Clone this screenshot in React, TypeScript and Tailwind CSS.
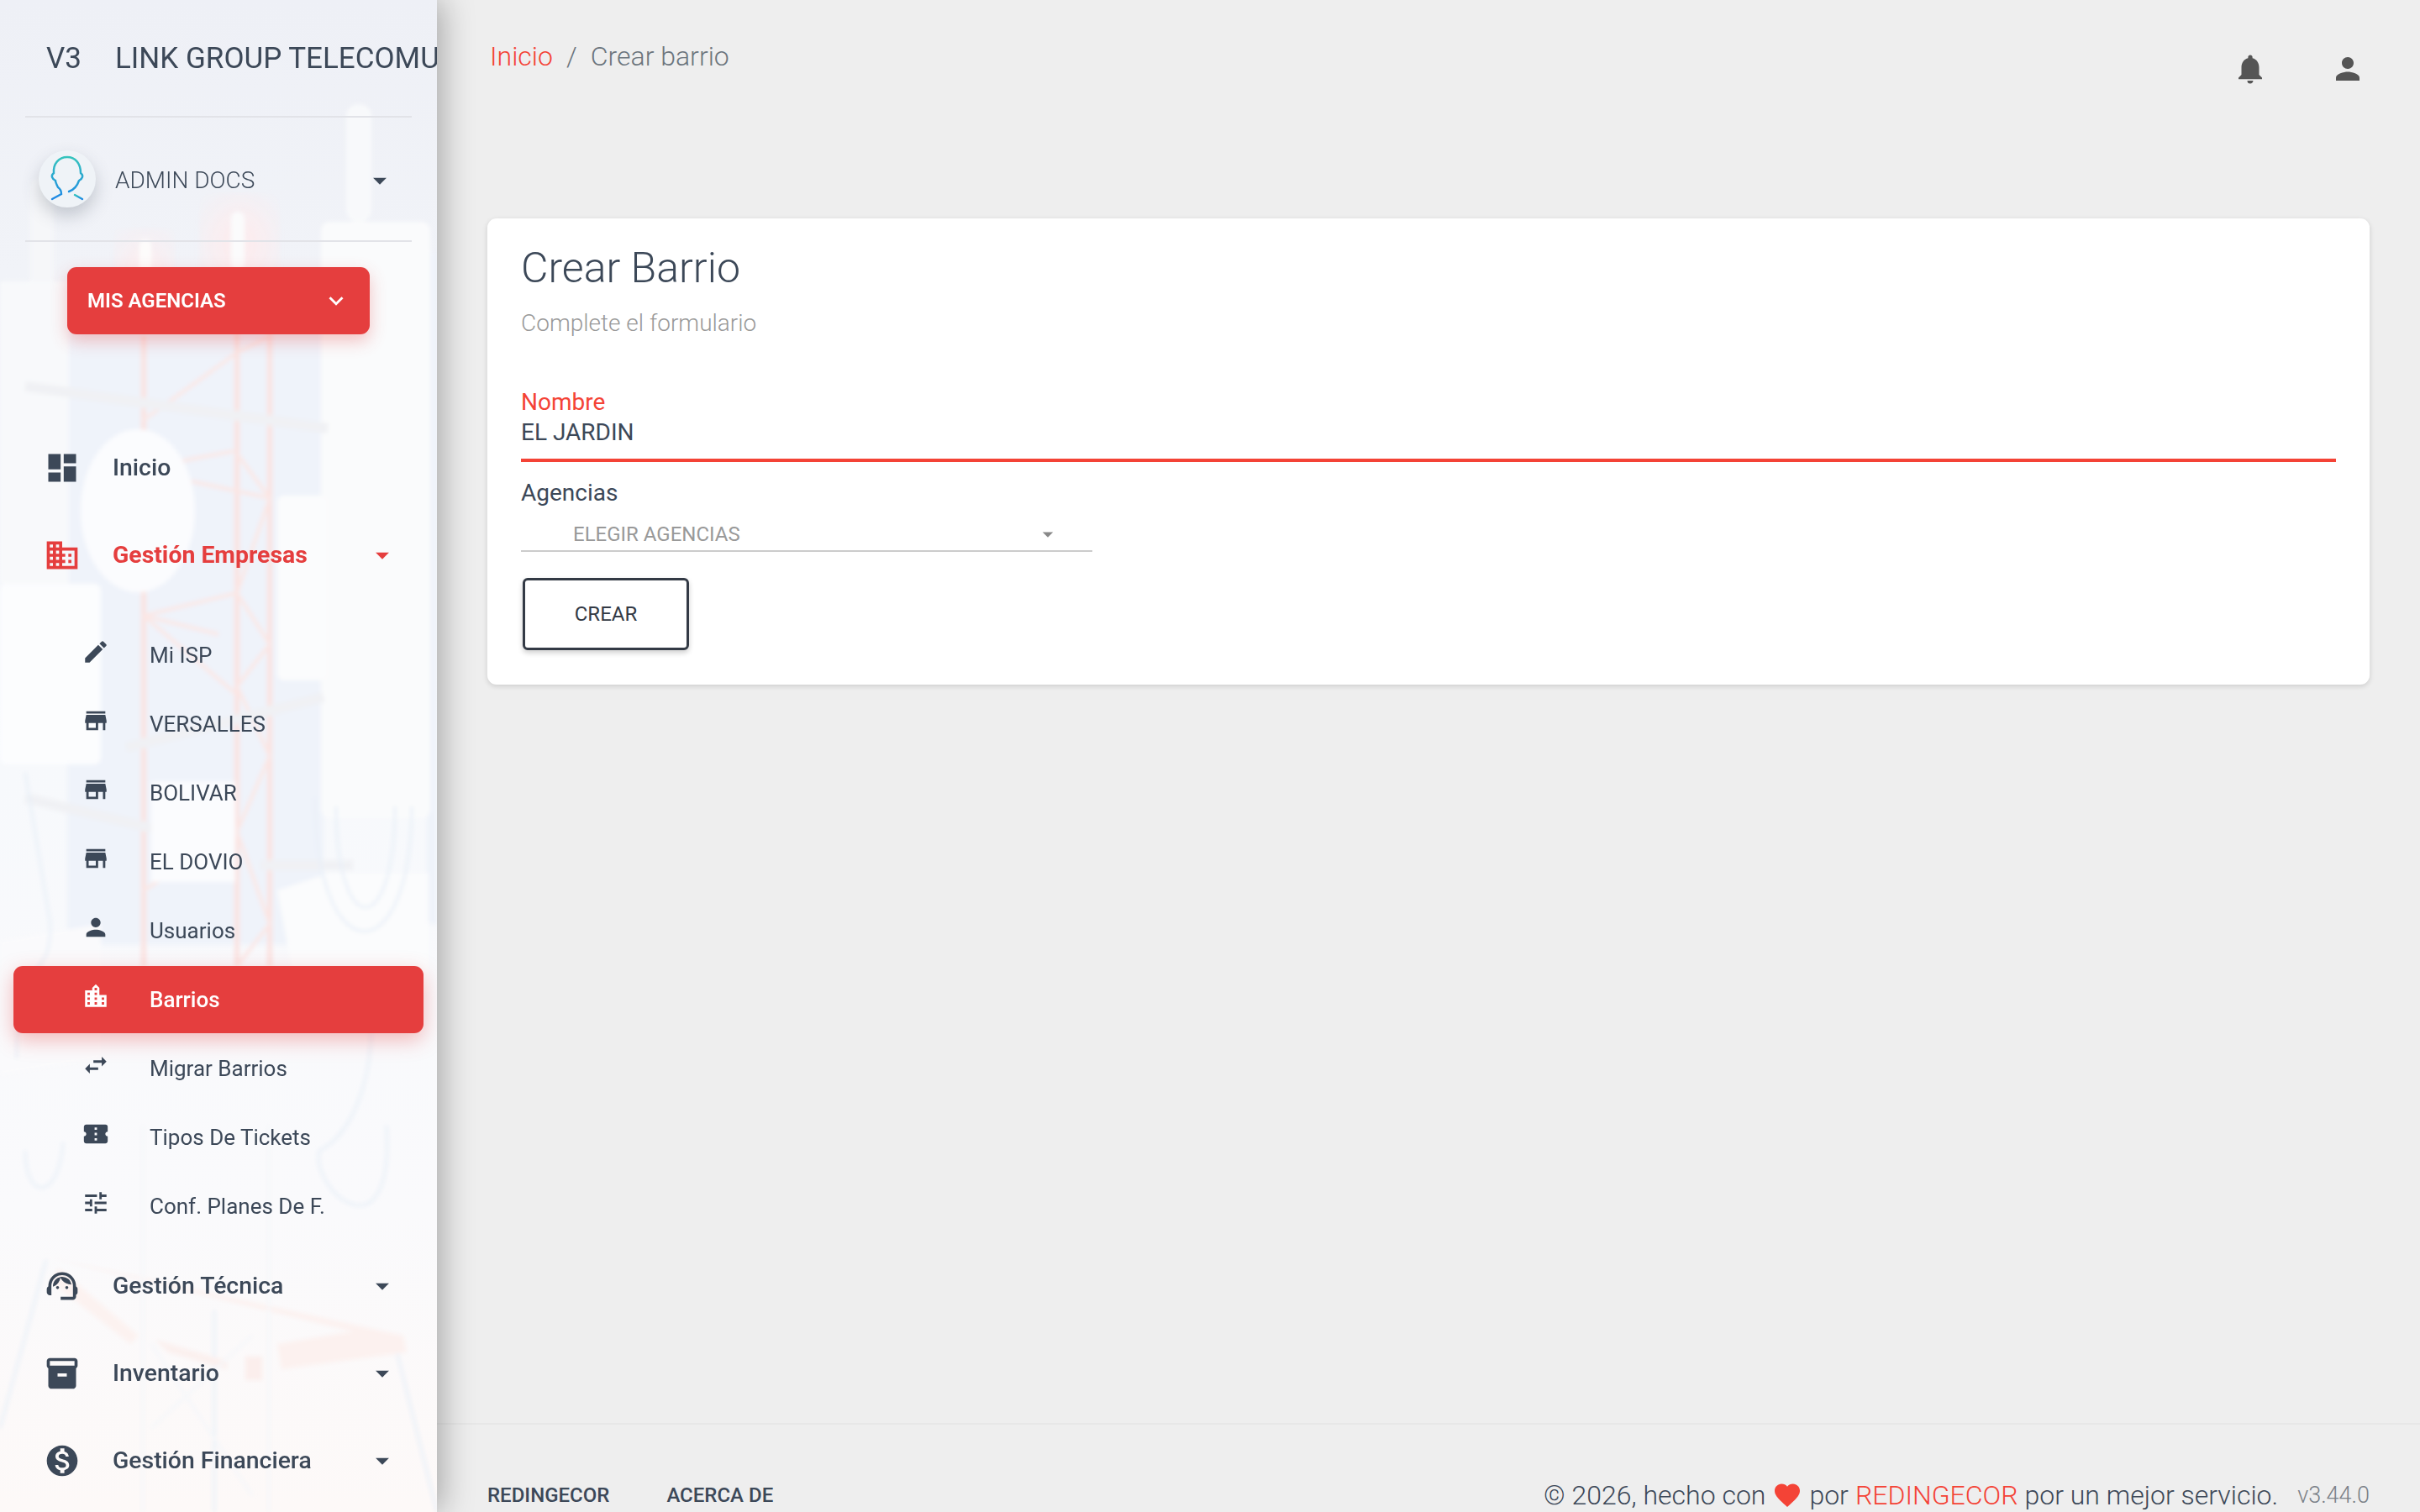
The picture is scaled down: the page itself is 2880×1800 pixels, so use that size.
import { ReactNode } from "react";
import {
  MdArrowDropDown,
  MdConfirmationNumber,
  MdDashboard,
  MdDomain,
  MdEdit,
  MdFavorite,
  MdInventory2,
  MdKeyboardArrowDown,
  MdLocationCity,
  MdMonetizationOn,
  MdNotifications,
  MdPerson,
  MdStore,
  MdSupportAgent,
  MdSwapHoriz,
  MdTune,
} from "react-icons/md";

const subItems = [
  { label: "Mi ISP", icon: <MdEdit /> },
  { label: "VERSALLES", icon: <MdStore /> },
  { label: "BOLIVAR", icon: <MdStore /> },
  { label: "EL DOVIO", icon: <MdStore /> },
  { label: "Usuarios", icon: <MdPerson /> },
  { label: "Barrios", icon: <MdLocationCity />, active: true },
  { label: "Migrar Barrios", icon: <MdSwapHoriz /> },
  { label: "Tipos De Tickets", icon: <MdConfirmationNumber /> },
  { label: "Conf. Planes De F.", icon: <MdTune /> },
];

// faded photo of the tower behind the sidebar
function SidebarPhoto() {
  return (
    <svg className="absolute inset-0 h-full w-full" viewBox="0 0 520 1800" preserveAspectRatio="none">
      <defs>
        <linearGradient id="base" x1="0" y1="0" x2="0" y2="1">
          <stop offset="0" stopColor="#eef0f6" />
          <stop offset="0.18" stopColor="#f1f3f8" />
          <stop offset="0.5" stopColor="#f7f9fc" />
          <stop offset="0.8" stopColor="#fafafc" />
          <stop offset="1" stopColor="#fdf9f8" />
        </linearGradient>
        <linearGradient id="head" x1="0" y1="0" x2="0" y2="1">
          <stop offset="0" stopColor="#35c4bd" />
          <stop offset="1" stopColor="#1e88e5" />
        </linearGradient>
        <filter id="soft">
          <feGaussianBlur stdDeviation="2.5" />
        </filter>
        <filter id="glow">
          <feGaussianBlur stdDeviation="18" />
        </filter>
      </defs>
      <rect width="520" height="1800" fill="url(#base)" />
      <g filter="url(#soft)">
        <rect x="80" y="345" width="305" height="780" fill="#eff3fa" />
        <rect x="508" y="300" width="12" height="800" fill="#eff3fa" />
        <ellipse cx="285" cy="290" rx="40" ry="50" fill="#fcecee" filter="url(#glow)" />
        <ellipse cx="172" cy="320" rx="30" ry="40" fill="#fcedef" filter="url(#glow)" />
        <rect x="412" y="124" width="30" height="140" rx="14" fill="#f8f9fb" />
        <rect x="382" y="264" width="130" height="710" rx="10" fill="#fafbfc" />
        <rect x="36" y="212" width="28" height="140" rx="12" fill="#f6f7f9" />
        <rect x="275" y="252" width="16" height="70" rx="8" fill="#fbfbfc" />
        <rect x="166" y="285" width="14" height="60" rx="7" fill="#fdfcfb" />
        <rect x="0" y="335" width="82" height="360" fill="#f8f9fb" />
        <g stroke="#fae3e1" strokeWidth="6" fill="none">
          <path d="M171 400V1150M282 380V1150M321 380V1150" />
        </g>
        <g stroke="#fbe7e5" strokeWidth="4" fill="none">
          <path d="M210 550L278 537M228 573L321 593M282 540L321 593L282 706L171 733" />
          <path d="M171 733L260 755M171 733L282 827M282 706L321 767L282 817" />
          <path d="M171 500L282 420L321 400M282 817L321 900L282 990L171 1060M282 990L321 1100L282 1150" />
        </g>
        <ellipse cx="164" cy="608" rx="68" ry="97" fill="#fbfcfe" />
        <rect x="0" y="695" width="120" height="215" rx="8" fill="#fcfdfe" />
        <rect x="330" y="590" width="60" height="220" rx="8" fill="#fbfcfd" />
        <g stroke="#f0f1f4" strokeWidth="12" fill="none">
          <path d="M30 460L390 510" />
          <path d="M30 950L240 1000" />
          <path d="M150 890L385 830" />
          <path d="M310 1030L420 1030" />
        </g>
        <rect x="180" y="930" width="100" height="120" fill="#fbfcfe" />
        <path d="M330 1060L390 1040L510 1040L510 1180L360 1220Z" fill="#fbfcfd" />
        <path d="M0 1120L120 1100L120 1260L0 1280Z" fill="#fafafc" />
        <g stroke="#e9f0f8" strokeWidth="3" fill="none">
          <path d="M375 950C375 1160 490 1160 490 960" />
          <path d="M400 960C400 1120 470 1120 470 960" />
          <path d="M30 920L60 1100M60 1100C60 1180 20 1120 20 1260" />
          <path d="M440 1180C450 1280 420 1350 380 1370C370 1420 470 1500 460 1340" />
          <path d="M30 1370C30 1430 70 1430 75 1360" />
          <path d="M255 1560V1800" />
          <path d="M0 1700L55 1500" />
          <path d="M470 1600L520 1800" />
        </g>
        <path d="M50 1495L480 1590L484 1610L335 1630L330 1600L420 1585Z" fill="#fcf1ef" />
        <path d="M70 1510L165 1590L155 1600L60 1525Z" fill="#fcf2f0" />
        <path d="M185 1595L270 1620L270 1630L200 1610Z" fill="#fbf0ee" />
        <rect x="292" y="1615" width="20" height="28" fill="#fbeeec" />
        <g stroke="#f5f7fa" strokeWidth="3" fill="none">
          <path d="M170 1340V1800M320 1340V1800M180 1600L300 1780M300 1590L180 1700" />
        </g>
      </g>
    </svg>
  );
}

function TopItem({
  icon,
  label,
  active,
  caret,
}: {
  icon: ReactNode;
  label: string;
  active?: boolean;
  caret?: boolean;
}) {
  return (
    <div
      className={`flex h-[80px] items-center pl-[52px] pr-[46px] text-[28.4px] ${
        active ? "font-bold text-[#e53e3e]" : "font-medium text-[#3c4858]"
      }`}
    >
      <span className="mr-[38px] text-[44px]">{icon}</span>
      <span className="flex-1">{label}</span>
      {caret && (
        <span className="text-[38px]">
          <MdArrowDropDown />
        </span>
      )}
    </div>
  );
}

function SubItem({ icon, label, active }: { icon: ReactNode; label: string; active?: boolean }) {
  return (
    <div
      className={`mx-[16px] flex h-[80px] items-center rounded-[11px] pl-[81px] text-[26px] ${
        active
          ? "bg-[#e53e3e] text-white shadow-[0_8px_24px_rgba(229,62,62,0.35)]"
          : "text-[#3c4858]"
      }`}
    >
      <span className="mb-[8px] mr-[47px] text-[34px]">{icon}</span>
      <span className={active ? "font-medium" : ""}>{label}</span>
    </div>
  );
}

function Sidebar() {
  return (
    <aside className="relative z-10 h-full w-[520px] shrink-0 overflow-hidden shadow-[6px_0_36px_rgba(0,0,0,0.3)]">
      <SidebarPhoto />
      <div className="relative">
        <div className="flex h-[138px] items-center whitespace-nowrap pl-[55px] pt-[3px] text-[35px] text-[#3c4858]">
          <span className="w-[82px] shrink-0">V3</span>
          <span className="min-w-0 flex-1 overflow-hidden">LINK GROUP TELECOMUN</span>
        </div>
        <div className="mx-[30px] h-[2px] bg-[#e2e3e8]" />
        <div className="flex h-[146px] items-center pl-[46px] pr-[49px]">
          <div className="mr-[23px] flex h-[68px] w-[68px] items-center justify-center rounded-full bg-[#eff3f7] shadow-[0_10px_20px_rgba(60,72,88,0.25)]">
            <svg viewBox="0 0 68 68" className="h-[68px] w-[68px]" fill="none" stroke="url(#head)" strokeWidth="2.4" strokeLinecap="round">
              <path d="M16 58L27 52C27 48 26 46 23 44C21 40 20 38 20 36C16 34 14 30 18 27C17 16 24 8 34 8C44 8 50 16 50 27C54 30 52 34 48 36C46 42 42 47 36 49" />
              <path d="M43 53L52 58" />
            </svg>
          </div>
          <span className="mt-[3px] flex-1 text-[28px] font-light text-[#3c4858]">ADMIN DOCS</span>
          <span className="mt-[3px] text-[38px] text-[#3c4858]">
            <MdArrowDropDown />
          </span>
        </div>
        <div className="mx-[30px] h-[2px] bg-[#e2e3e8]" />
        <div className="ml-[80px] mt-[30px] flex h-[80px] w-[360px] items-center justify-between rounded-[11px] bg-[#e53e3e] pl-[24px] pr-[23px] text-[24px] font-semibold text-white shadow-[0_8px_20px_rgba(229,62,62,0.3)]">
          <span>MIS AGENCIAS</span>
          <span className="text-[34px]">
            <MdKeyboardArrowDown />
          </span>
        </div>
        <nav className="mt-[119px] flex flex-col gap-[24px]">
          <TopItem icon={<MdDashboard />} label="Inicio" />
          <TopItem icon={<MdDomain />} label="Gestión Empresas" active caret />
          <div className="mt-[15px] mb-[-9px] flex flex-col gap-[2px]">
            {subItems.map((item) => (
              <SubItem key={item.label} icon={item.icon} label={item.label} active={item.active} />
            ))}
          </div>
          <TopItem icon={<MdSupportAgent />} label="Gestión Técnica" caret />
          <TopItem icon={<MdInventory2 />} label="Inventario" caret />
          <TopItem icon={<MdMonetizationOn />} label="Gestión Financiera" caret />
        </nav>
      </div>
    </aside>
  );
}

function CrearBarrioCard() {
  return (
    <section className="mx-[60px] h-[555px] rounded-[11px] bg-white px-[40px] pt-[27px] shadow-[0_2px_6px_rgba(0,0,0,0.14)]">
      <h1 className="h-[64px] text-[50px] font-light leading-[64px] text-[#3c4858]">Crear Barrio</h1>
      <p className="mt-[14px] h-[40px] text-[28px] font-light leading-[40px] text-[#999999]">
        Complete el formulario
      </p>
      <div className="mt-[55px] text-[28px] leading-[38px] text-[#f44336]">Nombre</div>
      <div className="h-[52px] border-b-[4px] border-[#f44336] text-[28px] leading-[34px] text-[#3c4858]">
        EL JARDIN
      </div>
      <div className="mt-[18px] text-[28px] leading-[38px] text-[#3c4858]">Agencias</div>
      <div className="mt-[10px] flex h-[41px] w-[680px] items-center border-b-2 border-[#cccccc] pl-[62px] pr-[38px] text-[24px] text-[#999999]">
        <span className="flex-1">ELEGIR AGENCIAS</span>
        <span className="text-[30px] text-[#888888]">
          <MdArrowDropDown />
        </span>
      </div>
      <button className="mt-[31px] ml-[2px] flex h-[86px] w-[198px] items-center justify-center rounded-[6px] border-[3px] border-[#333a45] bg-white text-[24px] text-[#333a45] shadow-[0_3px_6px_rgba(0,0,0,0.2)]">
        CREAR
      </button>
    </section>
  );
}

export default function App() {
  return (
    <div className="flex h-screen w-full overflow-hidden bg-[#eeeeee] font-['Roboto',sans-serif]">
      <Sidebar />
      <main className="flex h-full flex-1 flex-col">
        <header className="flex h-[260px] shrink-0 items-start justify-between pl-[63px] pr-[65px]">
          <div className="mt-[46px] flex h-[42px] items-center text-[32px] font-light leading-[42px]">
            <span className="text-[#f44336]">Inicio</span>
            <span className="mx-[16px] text-[#6c757d]">/</span>
            <span className="text-[#6c757d]">Crear barrio</span>
          </div>
          <div className="mt-[61px] flex gap-[74px] text-[42px] text-[#555555]">
            <MdNotifications />
            <MdPerson />
          </div>
        </header>
        <CrearBarrioCard />
        <div className="flex-1" />
        <footer className="flex h-[106px] shrink-0 items-end justify-between border-t-2 border-[#e7e7e7] px-[60px]">
          <div className="mb-[6px] flex gap-[68px] text-[24px] font-medium leading-[28px] text-[#3c4858]">
            <span>REDINGECOR</span>
            <span>ACERCA DE</span>
          </div>
          <div className="flex items-center whitespace-nowrap text-[32px] font-light leading-[40px] text-[#3c4858]">
            <span>© 2026, hecho con</span>
            <span className="mx-[8px] text-[36px] text-[#f44336]">
              <MdFavorite />
            </span>
            <span>por</span>
            <span className="mx-[8px] text-[#f44336]">REDINGECOR</span>
            <span>por un mejor servicio.</span>
            <span className="ml-[23px] text-[27px] text-[#7a8087]">v3.44.0</span>
          </div>
        </footer>
      </main>
    </div>
  );
}
